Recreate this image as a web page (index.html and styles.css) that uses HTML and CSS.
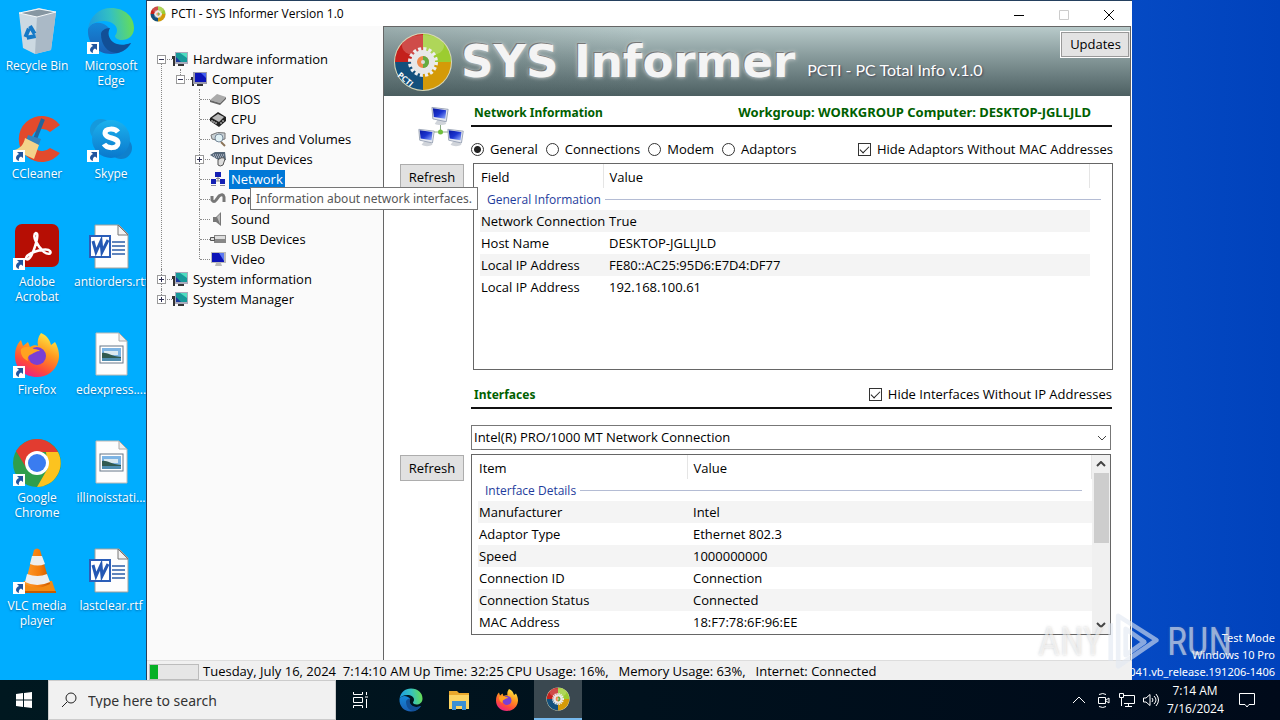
FILE: index.html
```
<!DOCTYPE html>
<html lang="en">
<head>
  <meta charset="UTF-8" />
  <meta name="viewport" content="width=device-width, initial-scale=1.0"/>
  <title>PCTI - SYS Informer Version 1.0</title>
  <link rel="stylesheet" href="styles.css">
</head>
<body>
  <!-- Shared icons -->
  <svg class="sprite" aria-hidden="true">
    <defs>
      <linearGradient id="gEdge" x1="0" y1="0.3" x2="1" y2="0.2">
        <stop offset="0" stop-color="#1b9de2"/><stop offset="0.5" stop-color="#35c1c0"/><stop offset="1" stop-color="#6be04c"/>
      </linearGradient>
      <linearGradient id="gEdge2" x1="0" y1="0" x2="0" y2="1">
        <stop offset="0" stop-color="#1487d8"/><stop offset="1" stop-color="#1a5fb4"/>
      </linearGradient>
      <linearGradient id="gFox" x1="0.8" y1="0" x2="0.3" y2="1">
        <stop offset="0" stop-color="#fff14a"/><stop offset="0.4" stop-color="#ff9a1f"/><stop offset="0.75" stop-color="#ff4a3a"/><stop offset="1" stop-color="#e8208a"/>
      </linearGradient>
      <linearGradient id="gScreen" x1="0" y1="0" x2="1" y2="1">
        <stop offset="0" stop-color="#0a1aa0"/><stop offset="0.5" stop-color="#1c34d0"/><stop offset="1" stop-color="#9cb6ff"/>
      </linearGradient>
      <linearGradient id="gSkype" x1="0" y1="0" x2="0" y2="1">
        <stop offset="0" stop-color="#1cb2ee"/><stop offset="1" stop-color="#0a78cc"/>
      </linearGradient>
      <linearGradient id="gCone" x1="0" y1="0" x2="1" y2="0">
        <stop offset="0" stop-color="#ff9a2a"/><stop offset="0.6" stop-color="#f47b0a"/><stop offset="1" stop-color="#c95a00"/>
      </linearGradient>
    </defs>
    <symbol id="edge" viewBox="0 0 48 48">
      <path fill="url(#gEdge2)" d="M1 22C0 36 10 47 24 47c9 0 16-4 20-11-6 3-14 3-19-1-5-4-6-10-3-14C16 14 4 14 1 22z"/>
      <path fill="#124f96" d="M14 27c0 10 6 19 16 19 6-1 12-6 14-10-8 3-14 2-18-1-4-3-6-9-3-14-5 0-9 3-9 6z"/>
      <path fill="url(#gEdge)" d="M1 22C3 9 12 1 24 1c14 0 23 9 23 20 0 8-6 12-12 12-4 0-7-2-7-4 0-1 2-2 2-6 0-5-6-9-13-9C9 14 3 17 1 22z"/>
    </symbol>
    <symbol id="firefox" viewBox="0 0 48 48">
      <path fill="url(#gFox)" d="M28 2c7 3 9 8 10 12l4-3c4 7 5 14 3 20-3 9-11 15-21 15C11 46 2 37 2 25c0-7 2-12 6-16l2 6 5-4 2 5c3-2 6-2 8-1-1-5 0-9 3-13z"/>
      <circle cx="24" cy="25" r="9" fill="#7a3fd4"/>
      <path fill="#ffa21f" d="M8 18c4-3 9-3 13 0 3 0 5 1 6 2-4 0-6 2-8 3-3 1-5 3-4 7-5-2-8-7-7-12z"/>
    </symbol>
    <symbol id="chrome" viewBox="0 0 48 48">
      <circle cx="24" cy="24" r="24" fill="#2f9e4c"/>
      <path fill="#e23c30" d="M3 12A24 24 0 0 1 45 13H24L14 30z"/>
      <path fill="#fcc31f" d="M45 13A24 24 0 0 1 24 48l11-19-2-16z"/>
      <circle cx="24" cy="24" r="12" fill="#fff"/><circle cx="24" cy="24" r="9" fill="#3a7cf0"/>
    </symbol>
    <symbol id="word" viewBox="3 0 48 48">
      <path fill="#fdfdfd" stroke="#a5a09a" d="M11 2h24l9 9v34H11z"/><path fill="#f1f1f1" stroke="#777" d="M34 2v10h10z"/>
      <path stroke="#2b5ea8" stroke-width="1.5" d="M28 19h13M28 23h13M28 27h13M28 31h13"/>
      <rect x="6" y="13" width="20" height="21" fill="#fff" stroke="#2b5eb8" stroke-width="2"/>
      <path fill="none" stroke="#2458b4" stroke-width="3" d="M9 18l3 11 5-11 1 11 6-12"/>
    </symbol>
    <symbol id="image" viewBox="3 -1 48 48">
      <path fill="#fdfdfd" stroke="#c0bab5" d="M12 1h23l8 8v34H12z"/><path fill="#eee" stroke="#aaa" d="M35 1v8h8z"/>
      <rect x="16" y="14" width="23" height="17" fill="#fff" stroke="#678"/>
      <path fill="#7db4e4" d="M18 16h19v13H18z"/><path fill="#dce9f0" d="M20 19h14v4H20z"/>
      <path fill="#315a50" d="M18 21c5-1 8 3 19 4v1H18z"/><path fill="#4f8db0" d="M18 26h19v3H18z"/>
    </symbol>
    <symbol id="shortcut" viewBox="0 0 12 12">
      <path fill="#fff" d="M0 0h12v12H0z"/>
      <path fill="#22569e" d="M4 2h6v6L8 6.500C6 7.500 5.500 9 6 11 2 10 2 6 6 4z"/>
    </symbol>
    <symbol id="pcti" viewBox="0 0 60 60">
      <circle cx="30" cy="30" r="29" fill="#d8d8b8"/>
      <path fill="#c4201c" d="M30 30V2A28 28 0 0 0 2 30z"/><path fill="#9ccc30" d="M30 30V2a28 28 0 0 1 28 28z"/>
      <path fill="#d49a08" d="M30 30h28a28 28 0 0 1-28 28z"/><path fill="#13507c" d="M30 30H2a28 28 0 0 0 28 28z"/>
      <ellipse cx="30" cy="14" rx="21" ry="11" fill="#fff" opacity="0.2"/>
      <circle cx="30" cy="30" r="13" fill="none" stroke="#eee" stroke-width="4" stroke-dasharray="3 2.100"/>
      <circle cx="30" cy="30" r="9" fill="#f08a4a" stroke="#e8e8e8" stroke-width="6"/>
      <path fill="#64ac40" d="M30 24a6 6 0 0 1 0 12z"/><circle cx="30" cy="30" r="2" fill="#ddd"/>
    </symbol>
    <symbol id="sysmon" viewBox="0 0 16 16">
      <path fill="#333" d="M0 5h3v10H1V8H0zM6 13h6v2H6z"/><path fill="#aab" d="M3 1h13v12H3z"/>
      <path fill="#169a9a" d="M4 2h11v9H4z"/><path fill="#4fdcc0" d="M8 2h7v5z"/><path fill="#1d3c9c" d="M4 6l5 5H4z"/>
    </symbol>
    <symbol id="bluemon" viewBox="0 0 16 16">
      <path fill="#333" d="M0 6h3v9H1V9H0zM6 13h6v2H6z"/><path fill="#99a" d="M2 1h14v12H2z"/>
      <path fill="#0c14b8" d="M4 2h11v9H4z"/><path fill="#4460f0" d="M10 2h5v5z"/>
    </symbol>
    <symbol id="netpc" viewBox="0 0 22 20">
      <path fill="#d0d4da" d="M8 14h7l2 4c-3 2-9 2-12 0z"/>
      <path fill="#e4e7ee" stroke="#98a2b4" d="M2 1l17 2-2 13L3 13z"/>
      <path fill="url(#gScreen)" d="M3 2l14 2-1 9-12-2z"/>
    </symbol>
  </svg>

  <main class="desktop">
    <!-- Desktop shortcuts -->
    <div class="shortcuts">
      <a href="#" class="shortcut">
        <svg class="pic" viewBox="0 0 48 48"><path fill="#ccd9e2" d="M6 6l20-5 17 4-5 38-16 4-12-6z"/><path fill="#aab9c6" d="M24 9l19-4-5 38-16 4z"/><path fill="#8797a2" stroke="#f4f8fa" d="M6 6l20-4 17 3-19 5z"/><path fill="none" stroke="#1679c6" stroke-width="4" stroke-dasharray="9 3" d="M17 19l6 10-11 2z"/></svg>
        <span>Recycle Bin</span></a>
      <a href="#" class="shortcut">
        <svg class="pic"><use href="#edge"/></svg><svg class="arrow"><use href="#shortcut"/></svg>
        <span>Microsoft<br>Edge</span></a>
      <a href="#" class="shortcut">
        <svg class="pic" viewBox="0 0 48 48"><path fill="#e24a2c" d="M47 10A23 23 0 1 0 47 38l-10-5a11 11 0 1 1 0-16z"/><path stroke="#23659c" stroke-width="4" d="M30 4L22 24"/><path fill="#3484bd" d="M15 20l13 4-3 8-12-6z"/><path fill="#f3d38a" d="M12 23l14 7-5 14-20-9c6-1 10-6 11-12z"/></svg><svg class="arrow"><use href="#shortcut"/></svg>
        <span>CCleaner</span></a>
      <a href="#" class="shortcut">
        <svg class="pic" viewBox="0 0 48 48"><circle cx="14" cy="15" r="11" fill="#1599dc"/><circle cx="34" cy="33" r="11" fill="#0f80cc"/><circle cx="24" cy="24" r="19" fill="url(#gSkype)"/><path fill="none" stroke="#fff" stroke-width="5" d="M31 17c-3-4-13-4-13 1 0 6 13 4 13 10 0 6-11 6-14 1"/></svg><svg class="arrow"><use href="#shortcut"/></svg>
        <span>Skype</span></a>
      <a href="#" class="shortcut">
        <svg class="pic" viewBox="0 0 48 48"><rect x="2" y="1" width="44" height="43" rx="7" fill="#b60e04"/><path fill="none" stroke="#fff" stroke-width="2.500" d="M23 10c-5 2 2 14 8 19 4 3 8 2 6-1-3-4-19 1-23 5-3 4 1 5 4 0 3-5 9-23 5-23z"/></svg><svg class="arrow"><use href="#shortcut"/></svg>
        <span>Adobe<br>Acrobat</span></a>
      <a href="#" class="shortcut"><svg class="pic"><use href="#word"/></svg><span>antiorders.rtf</span></a>
      <a href="#" class="shortcut">
        <svg class="pic"><use href="#firefox"/></svg><svg class="arrow"><use href="#shortcut"/></svg>
        <span>Firefox</span></a>
      <a href="#" class="shortcut"><svg class="pic"><use href="#image"/></svg><span>edexpress....</span></a>
      <a href="#" class="shortcut">
        <svg class="pic"><use href="#chrome"/></svg><svg class="arrow"><use href="#shortcut"/></svg>
        <span>Google<br>Chrome</span></a>
      <a href="#" class="shortcut"><svg class="pic"><use href="#image"/></svg><span>illinoisstati...</span></a>
      <a href="#" class="shortcut">
        <svg class="pic" viewBox="0 0 48 48"><path fill="#f38a14" d="M11 34h28l4 12H7z"/><path fill="#c65c00" d="M7 44h36v2H7z"/><path fill="url(#gCone)" d="M21 3q3-3 6 0l10 34q-13 7-25 0z"/><path fill="#eee" d="M19 9h10l3 8q-7 3-15 0zM14 27q11 4 20 0l3 8q-13 6-25 0z"/></svg><svg class="arrow"><use href="#shortcut"/></svg>
        <span>VLC media<br>player</span></a>
      <a href="#" class="shortcut"><svg class="pic"><use href="#word"/></svg><span>lastclear.rtf</span></a>
    </div>

    <div class="build">
      <p>Test Mode</p>
      <p>Windows 10 Pro</p>
      <p>041.vb_release.191206-1406</p>
    </div>

    <!-- SYS Informer window -->
    <section class="window">
      <header class="titlebar">
        <svg class="app-icon"><use href="#pcti"/></svg>
        <h1>PCTI - SYS Informer Version 1.0</h1>
        <button aria-label="Minimize"><svg viewBox="0 0 12 12"><path d="M1 6.500h10"/></svg></button>
        <button aria-label="Maximize" disabled><svg viewBox="0 0 12 12"><path d="M1.500 1.500h9v9h-9z"/></svg></button>
        <button aria-label="Close"><svg viewBox="0 0 12 12"><path d="M1 1l10 10M11 1L1 11"/></svg></button>
      </header>

      <div class="client">
        <nav class="sidebar">
          <ul class="tree">
            <li>
              <div class="node"><span class="toggle minus"></span><svg><use href="#sysmon"/></svg><span>Hardware information</span></div>
              <ul>
                <li>
                  <div class="node"><span class="toggle minus"></span><svg><use href="#bluemon"/></svg><span>Computer</span></div>
                  <ul>
                    <li><div class="node"><svg viewBox="0 0 16 16"><path fill="#aaa" d="M0 9l7-6 9 3-6 6z"/><path fill="#666" d="M0 9l10 3 6-6v2l-6 6-10-3z"/></svg><span>BIOS</span></div></li>
                    <li><div class="node"><svg viewBox="0 0 16 16"><path fill="#222" d="M0 7l8-6 8 5v4l-7 6-9-6z"/><path fill="#bbb" d="M2 7l6-4 6 3-5 5z"/><path stroke="#ddd" d="M2 9v2M4 10v2M6 11v2M11 11v2M13 9v2"/></svg><span>CPU</span></div></li>
                    <li><div class="node"><svg viewBox="0 0 16 16"><path fill="#c8d0d4" stroke="#777" d="M1 4q6-4 14-2v6q-7 3-13 0z"/><circle cx="9" cy="7" r="4" fill="#dff0f4" stroke="#789"/><path stroke="#8a7358" stroke-width="2" d="M11 11l4 4"/></svg><span>Drives and Volumes</span></div></li>
                    <li><div class="node"><span class="toggle plus"></span><svg viewBox="0 0 16 16"><path fill="#567" d="M0 4l5-3h10l1 8-6 1z"/><path stroke="#dde" stroke-dasharray="1 1" d="M3 4h11M4 6h10"/><path fill="#ddd" stroke="#555" d="M8 9q4-4 7-1l-2 6q-3 2-5 0z"/></svg><span>Input Devices</span></div></li>
                    <li><div class="node selected"><svg viewBox="0 0 16 16"><path stroke="#888" d="M8 6v4M3 10h10"/><path fill="#1420b4" d="M5 1h6v5H5zM1 8h5v5H1zM10 8h5v5h-5z"/><path fill="#889" d="M6 7h4v1H6zM1 14h5v1H1zM10 14h5v1h-5z"/></svg><span>Network</span></div>
                      <div class="tooltip" role="tooltip">Information about network interfaces.</div></li>
                    <li><div class="node"><svg viewBox="0 0 16 16"><path fill="none" stroke="#777" stroke-width="3" d="M2 5v4q2 3 4 0l3-4q4-3 5 1v5"/></svg><span>Ports</span></div></li>
                    <li><div class="node"><svg viewBox="0 0 16 16"><path fill="#777" d="M3 6h3l5-5v14l-5-4H3z"/><path fill="#bbb" d="M7 6l3-3v10z"/></svg><span>Sound</span></div></li>
                    <li><div class="node"><svg viewBox="0 0 16 16"><path fill="#888" d="M4 4h12v8H4z"/><path fill="#ddd" d="M5 5h10v3H5zM0 6h4v4H0z"/><path fill="none" stroke="#555" d="M.5 6.500h4v3h-4z"/></svg><span>USB Devices</span></div></li>
                    <li><div class="node"><svg viewBox="0 0 16 16"><path fill="#bbb" d="M1 1h15v11H1zM6 12h5l1 3H5z"/><path fill="#0c14b8" d="M2 2h12v9H2z"/><path fill="#5c78f0" d="M9 2h5v8z"/></svg><span>Video</span></div></li>
                  </ul>
                </li>
              </ul>
            </li>
            <li><div class="node"><span class="toggle plus"></span><svg><use href="#sysmon"/></svg><span>System information</span></div></li>
            <li><div class="node"><span class="toggle plus"></span><svg><use href="#sysmon"/></svg><span>System Manager</span></div></li>
          </ul>
        </nav>

        <div class="content">
          <div class="banner">
            <svg class="logo" viewBox="0 0 60 60"><use href="#pcti"/><text x="4" y="44" transform="rotate(40 4 44)">PCTI</text></svg>
            <span class="brand">SYS Informer</span>
            <span class="tagline">PCTI - PC Total Info v.1.0</span>
            <button class="updates">Updates</button>
          </div>

          <section class="panel grow">
            <div class="side">
              <svg class="net" viewBox="0 0 48 44"><path stroke="#8cab84" d="M23.500 18v10M15 26h18"/><circle cx="23.500" cy="26" r="2.500" fill="#6fbe3c"/><use href="#netpc" x="13" y="0" width="21" height="20"/><use href="#netpc" x="0" y="21" width="20" height="21"/><use href="#netpc" x="29" y="21" width="20" height="21"/></svg>
              <button>Refresh</button>
            </div>
            <div class="body">
              <div class="head">
                <h2>Network Information</h2>
                <h2 class="host">Workgroup: WORKGROUP Computer: DESKTOP-JGLLJLD</h2>
              </div>
              <form class="options">
                <label><input type="radio" name="view" checked>General</label>
                <label><input type="radio" name="view">Connections</label>
                <label><input type="radio" name="view">Modem</label>
                <label><input type="radio" name="view">Adaptors</label>
                <label class="right"><input type="checkbox" checked>Hide Adaptors Without MAC Addresses</label>
              </form>
              <div class="list fields">
                <table>
                  <thead><tr><th>Field</th><th>Value</th></tr></thead>
                  <tbody>
                    <tr class="group"><td colspan="2"><div>General Information</div></td></tr>
                    <tr><td>Network Connection</td><td>True</td></tr>
                    <tr><td>Host Name</td><td>DESKTOP-JGLLJLD</td></tr>
                    <tr><td>Local IP Address</td><td>FE80::AC25:95D6:E7D4:DF77</td></tr>
                    <tr><td>Local IP Address</td><td>192.168.100.61</td></tr>
                  </tbody>
                </table>
              </div>
            </div>
          </section>

          <section class="panel">
            <div class="side"><button>Refresh</button></div>
            <div class="body">
              <div class="head">
                <h2>Interfaces</h2>
                <label><input type="checkbox" checked>Hide Interfaces Without IP Addresses</label>
              </div>
              <div class="combo">
                <select aria-label="Interface"><option>Intel(R) PRO/1000 MT Network Connection</option></select>
                <svg viewBox="0 0 10 6"><path d="M1 1l4 4 4-4"/></svg>
              </div>
              <div class="list details">
                <table>
                  <thead><tr><th>Item</th><th>Value</th></tr></thead>
                  <tbody>
                    <tr class="group"><td colspan="2"><div>Interface Details</div></td></tr>
                    <tr><td>Manufacturer</td><td>Intel</td></tr>
                    <tr><td>Adaptor Type</td><td>Ethernet 802.3</td></tr>
                    <tr><td>Speed</td><td>1000000000</td></tr>
                    <tr><td>Connection ID</td><td>Connection</td></tr>
                    <tr><td>Connection Status</td><td>Connected</td></tr>
                    <tr><td>MAC Address</td><td>18:F7:78:6F:96:EE</td></tr>
                  </tbody>
                </table>
                <div class="scrollbar">
                  <svg viewBox="0 0 10 6"><path d="M1 5l4-4 4 4"/></svg>
                  <div class="thumb"></div>
                  <svg viewBox="0 0 10 6"><path d="M1 1l4 4 4-4"/></svg>
                </div>
              </div>
            </div>
          </section>
        </div>
      </div>

      <footer class="status">
        <div class="meter"><div style="width: 16%"></div></div>
        <span class="time">Tuesday, July 16, 2024&nbsp; 7:14:10 AM</span>
        <span class="uptime">Up Time: 32:25</span>
        <span class="cpu">CPU Usage: 16%,</span>
        <span class="memory">Memory Usage: 63%,</span>
        <span>Internet: Connected</span>
      </footer>
    </section>

    <div class="watermark">
      <span>ANY</span>
      <svg viewBox="0 0 60 64"><path d="M12 4l41 26-41 28z"/><path d="M4 12v40M20 18v28l20-14z"/></svg>
      <span>RUN</span>
    </div>
  </main>

  <!-- Taskbar -->
  <footer class="taskbar">
    <button class="start" aria-label="Start"><svg viewBox="0 0 16 16"><path fill="#fff" d="M0 2l7-1v6.500H0zM8 1l8-1v7.500H8zM0 8.500h7V15l-7-1zM8 8.500h8V16l-8-1z"/></svg></button>
    <label class="search">
      <svg viewBox="0 0 16 16"><circle cx="10" cy="6" r="5"/><path d="M6 10l-5 5"/></svg>
      <input type="text" placeholder="Type here to search" aria-label="Search">
    </label>
    <button aria-label="Task View"><svg class="line small" viewBox="0 0 16 16"><path d="M1.500 0v2.500h9V0M1.500 5.500h9v5h-9zM1.500 16v-2.500h9V16M14.500 0v3M14.500 7v9M13 5h3"/></svg></button>
    <button aria-label="Microsoft Edge" class="pinned"><svg><use href="#edge"/></svg></button>
    <button aria-label="File Explorer"><svg viewBox="0 0 24 24"><path fill="#e9a82c" d="M2 3h8l2 2h10v16H2z"/><path fill="#fcd462" d="M2 7h20v14H2z"/><path fill="#3b8fd2" d="M5 13h14v9h-4v-4H9v4H5z"/></svg></button>
    <button aria-label="Firefox"><svg><use href="#firefox"/></svg></button>
    <button aria-label="SYS Informer" class="pinned active"><svg><use href="#pcti"/></svg></button>
    <div class="tray">
      <svg class="line" viewBox="0 0 16 16"><path d="M2 11l6-6 6 6"/></svg>
      <svg class="line" viewBox="0 0 16 16"><path d="M3.500 5.500h7v6h-7zM11 8l3-2v5l-3-2M4 2.500q4-2 7 0M4 14.500q4 2 7 0"/></svg>
      <svg class="line" viewBox="0 0 16 16"><path d="M5 3.500h10.500v8H5M9.500 12v3M6 14.500h7M.5 1.500h4v4h-4zM2.500 6v8"/></svg>
      <svg class="line" viewBox="0 0 16 16"><path d="M.5 6v4h2.500l4 3.500v-11L3 6zM9 6q2 2 0 4M11 4q4 4 0 8M13 2q5 6 0 12"/></svg>
      <time class="clock">7:14 AM<br>7/16/2024</time>
      <svg class="line notes" viewBox="0 0 16 16"><path d="M.5 1.500h15v11H10l-2 2.500-2-2.500H.5z"/></svg>
    </div>
  </footer>
</body>
</html>
```
FILE: styles.css
```
* {
  box-sizing: border-box;
}
body {
  margin: 0;
  height: 100vh;
  display: flex;
  flex-direction: column;
  overflow: hidden;
  font-family: "Open Sans", "Noto Sans", sans-serif;
  font-size: 12px;
  line-height: 15px;
  color: #000;
}
h1, h2, p, ul {
  margin: 0;
  padding: 0;
  font-weight: normal;
  font-size: inherit;
}
button, input, select {
  font: inherit;
  color: inherit;
}
.sprite {
  position: absolute;
  width: 0;
  height: 0;
}

/* Desktop */
.desktop {
  flex: 1;
  position: relative;
  min-height: 0;
  background: linear-gradient(90deg, #00adff 12%, #054ac4 88%, #0042bc);
}
.shortcuts {
  display: grid;
  grid-template-columns: 74px 74px;
  grid-auto-rows: 108px;
}
.shortcut {
  position: relative;
  padding-top: 7px;
  text-align: center;
  color: #fff;
  text-decoration: none;
  text-shadow: 0 1px 2px rgba(0, 60, 110, 0.6);
}
.shortcut span {
  display: block;
  margin-top: 3px;
  white-space: nowrap;
}
.pic {
  display: block;
  width: 48px;
  height: 48px;
  margin: 0 auto;
}
.arrow {
  position: absolute;
  left: 13px;
  top: 42px;
  width: 12px;
  height: 12px;
}
.build {
  position: absolute;
  right: 5px;
  bottom: 0;
  font-family: "Noto Sans", sans-serif;
  font-size: 11px;
  line-height: 17px;
  text-align: right;
  color: #fff;
}

/* Window */
.window {
  position: absolute;
  top: 0;
  bottom: 0;
  left: 146px;
  right: 148px;
  display: flex;
  flex-direction: column;
  background: #fff;
  border: solid #24405e;
  border-width: 1px 0 0 1px;
  font-size: 13px;
}
.titlebar {
  display: flex;
  align-items: center;
  height: 25px;
  padding-right: 1px;
  font-size: 12px;
}
.titlebar h1 {
  flex: 1;
}
.app-icon {
  width: 16px;
  height: 16px;
  margin: 0 5px 0 3px;
}
.titlebar button {
  width: 45px;
  height: 24px;
  padding: 0;
  border: none;
  background: none;
}
.titlebar button svg {
  width: 12px;
  height: 12px;
  fill: none;
  stroke: #000;
  vertical-align: middle;
}
.titlebar button:disabled svg {
  stroke: #ccc;
}
.client {
  flex: 1;
  display: flex;
  min-height: 0;
  margin-right: 1px;
}
.sidebar {
  position: relative;
  z-index: 1;
  width: 236px;
  padding: 23px 0 0 5px;
  background: #fafafa;
}

/* Tree */
.tree, .tree ul {
  list-style: none;
}
.tree ul {
  padding-left: 19px;
}
.tree li {
  position: relative;
}
.tree li::before {
  content: "";
  position: absolute;
  left: 9px;
  top: 0;
  bottom: 0;
  border-left: 1px dotted #888;
}
.tree > li:first-child::before {
  top: 10px;
}
.tree li:last-child::before {
  bottom: auto;
  height: 10px;
}
.node {
  position: relative;
  display: flex;
  align-items: center;
  height: 20px;
  padding-left: 20px;
}
.node::before {
  content: "";
  position: absolute;
  left: 10px;
  top: 10px;
  width: 10px;
  border-top: 1px dotted #888;
}
.node svg {
  width: 16px;
  height: 16px;
}
.node > span:last-child {
  margin-left: 3px;
  padding: 2px;
}
.toggle {
  position: absolute;
  left: 5px;
  top: 6px;
  width: 9px;
  height: 9px;
  background: #fff;
  border: 1px solid #999;
}
.toggle::before, .plus::after {
  content: "";
  position: absolute;
  left: 1px;
  top: 3px;
  width: 5px;
  height: 1px;
  background: #335;
}
.plus::after {
  transform: rotate(90deg);
}
.selected > span:last-child {
  background: #0078d7;
  color: #fff;
}
.tooltip {
  position: absolute;
  left: 60px;
  top: 18px;
  z-index: 2;
  padding: 3px 5px;
  background: #fff;
  border: 1px solid #767676;
  font-family: "Noto Sans", sans-serif;
  font-size: 12px;
  color: #575757;
  white-space: nowrap;
}

/* Content */
.content {
  flex: 1;
  min-width: 0;
  display: flex;
  flex-direction: column;
  border: solid #666;
  border-width: 1px 1px 0 1px;
}
.banner {
  display: flex;
  align-items: center;
  height: 69px;
  padding-left: 9px;
  background: linear-gradient(90deg, rgba(70, 90, 92, 0.25), transparent 35%), linear-gradient(#b8caca, #859899 45%, #6b7e80 70%, #4c5f61);
}
.logo {
  width: 60px;
  height: 60px;
}
.logo text {
  fill: #fff;
  font-size: 8px;
  font-weight: bold;
}
.brand {
  margin: 0 12px 0 8px;
  font: bold 45px/60px "DejaVu Sans", sans-serif;
  color: #f4f4f4;
  text-shadow: -1px -1px 0 #777, 0 0 4px #ddd;
  white-space: nowrap;
}
.tagline {
  flex: 1;
  padding-top: 16px;
  font: 16px/20px Lato, sans-serif;
  color: #fff;
  text-shadow: 1px 1px 2px #445;
  white-space: nowrap;
}
.updates {
  align-self: flex-start;
  width: 70px;
  height: 27px;
  margin-top: 4px;
  padding: 0;
  background: #e3e3e3;
  border: 1px solid #fff;
  border-right: none;
  outline: 1px solid #999;
  outline-offset: -2px;
}

.panel {
  display: grid;
  grid-template-columns: 64px 1fr;
  gap: 7px;
  padding: 0 17px 0 16px;
}
.grow {
  flex: 1;
  min-height: 0;
}
.body {
  display: flex;
  flex-direction: column;
}
.side {
  padding-top: 85px;
}
.grow .side {
  padding-top: 10px;
}
.side button {
  display: block;
  width: 64px;
  height: 26px;
  padding: 0;
  background: #e1e1e1;
  border: 1px solid #adadad;
}
.net {
  display: block;
  width: 48px;
  height: 44px;
  margin: 0 0 14px 17px;
}
.head {
  display: flex;
  align-items: center;
  justify-content: space-between;
  height: 31px;
  margin-right: 1px;
  padding: 3px 0 0 3px;
  border-bottom: 2px solid #111;
}
.head h2 {
  font-family: "Noto Sans", sans-serif;
  font-size: 12px;
  font-weight: bold;
  color: #006000;
  white-space: nowrap;
}
.head .host {
  margin-right: 21px;
  font-size: 13px;
}
.options {
  display: flex;
  align-items: center;
  height: 36px;
  padding-top: 8px;
}
label {
  display: flex;
  align-items: center;
  white-space: nowrap;
}
.options label {
  margin-right: 8px;
}
.options .right {
  margin: 0 0 0 auto;
}
input[type="radio"], input[type="checkbox"] {
  appearance: none;
  width: 13px;
  height: 13px;
  margin: 0 6px 0 0;
  border: 1px solid #333;
  background: #fff;
}
input[type="radio"] {
  border-radius: 50%;
}
input[type="radio"]:checked {
  background: radial-gradient(circle, #222 3px, #fff 4px);
}
input[type="checkbox"]:checked::before {
  content: "";
  display: block;
  width: 8px;
  height: 4px;
  margin: 2px 0 0 1px;
  border: solid #222;
  border-width: 0 0 1px 1px;
  transform: rotate(-45deg);
}

/* Lists */
.list {
  display: flex;
  border: 1px solid #666;
}
.fields {
  flex: 1;
  margin-left: 2px;
  padding: 0 22px 0 6px;
}
.details {
  height: 181px;
  margin: 4px 2px 25px 0;
  padding-left: 6px;
}
table {
  flex: 1;
  align-self: flex-start;
  width: 100%;
  border-collapse: collapse;
  table-layout: fixed;
}
th, td {
  height: 22px;
  padding: 0 1px;
  text-align: left;
  font-weight: normal;
  white-space: nowrap;
}
th {
  height: 24px;
  padding-top: 2px;
  border-right: 1px solid #e5e5e5;
}
th + th, td + td {
  padding-left: 6px;
}
.fields th:first-child {
  width: 123px;
}
.details th:first-child {
  width: 209px;
}
tbody tr:nth-child(even) {
  background: #f4f4f4;
}
.group div {
  display: flex;
  align-items: center;
  padding-left: 6px;
  font-size: 12px;
  color: #1e3c9c;
}
.group div::after {
  content: "";
  flex: 1;
  height: 1px;
  margin-left: 4px;
  background: #b4bcd4;
}
.fields .group div {
  margin-right: -12px;
}
.details .group div {
  margin-right: 9px;
}
.panel:last-child .head {
  margin-top: 8px;
}
.combo {
  position: relative;
  margin: 16px 2px 0 0;
}
.combo select {
  appearance: none;
  display: block;
  width: 100%;
  height: 25px;
  padding: 0 2px;
  border: 1px solid #777;
  border-radius: 0;
  background: #fff;
}
.combo svg {
  position: absolute;
  right: 4px;
  top: 10px;
}
.combo svg, .scrollbar svg {
  width: 10px;
  height: 6px;
  fill: none;
  stroke: #444;
}
.scrollbar {
  display: flex;
  flex-direction: column;
  align-items: center;
  flex: none;
  width: 18px;
  padding: 6px 0;
  background: #f0f0f0;
}
.scrollbar svg {
  stroke-width: 2;
}
.thumb {
  width: 15px;
  height: 70px;
  margin: 6px 0 auto;
  background: #cdcdcd;
}

/* Status bar */
.status {
  display: flex;
  align-items: center;
  height: 20px;
  padding: 2px 2px 0;
  background: #f0f0f0;
  border-top: 1px solid #ddd;
  white-space: nowrap;
}
.meter {
  width: 50px;
  height: 16px;
  margin-right: 4px;
  background: #e6e6e6;
  border: 1px solid #bcbcbc;
}
.meter div {
  height: 100%;
  background: #06b025;
}
.time, .uptime {
  margin-right: 3px;
}
.cpu, .memory {
  margin-right: 10px;
}

.watermark {
  position: absolute;
  right: 48px;
  bottom: 6px;
  display: flex;
  align-items: center;
  gap: 4px;
  font: 38px/64px "Roboto Condensed", "Liberation Sans Narrow", "Liberation Sans", sans-serif;
  color: rgba(255, 255, 255, 0.55);
  text-shadow: 0 0 3px rgba(120, 120, 120, 0.35);
}
.watermark svg {
  width: 56px;
  height: 64px;
  fill: none;
  stroke: rgba(225, 232, 242, 0.6);
  stroke-width: 5;
  stroke-linejoin: round;
}

/* Taskbar */
.taskbar {
  display: flex;
  height: 40px;
  background: linear-gradient(90deg, #001820, #000a1a);
  color: #fff;
}
.taskbar button {
  width: 48px;
  padding: 0;
  border: none;
  background: none;
}
.taskbar button svg {
  width: 24px;
  height: 24px;
  vertical-align: middle;
}
.taskbar .start svg, .taskbar button .small {
  width: 16px;
  height: 16px;
}
.taskbar .pinned {
  margin-left: 3px;
}
.taskbar .active {
  background: #3a4850;
  border-bottom: 2px solid #76b9ed;
}
.search {
  width: 288px;
  gap: 11px;
  padding: 0 12px;
  background: #f1f1f1;
  border: 1px solid #ccc;
}
.search svg {
  width: 16px;
  height: 16px;
  fill: none;
  stroke: #222;
}
.search input {
  flex: 1;
  min-width: 0;
  padding: 0;
  border: none;
  background: none;
  font-family: "Noto Sans", sans-serif;
  font-size: 14px;
}
.search input::placeholder {
  color: #333;
}
.line {
  fill: none;
  stroke: #fff;
}
.tray {
  display: flex;
  align-items: center;
  gap: 8px;
  margin-left: auto;
  padding-right: 25px;
}
.tray svg {
  width: 16px;
  height: 16px;
}
.clock {
  width: 56px;
  line-height: 18px;
  text-align: center;
}
.tray .notes {
  margin-left: 8px;
}
```
